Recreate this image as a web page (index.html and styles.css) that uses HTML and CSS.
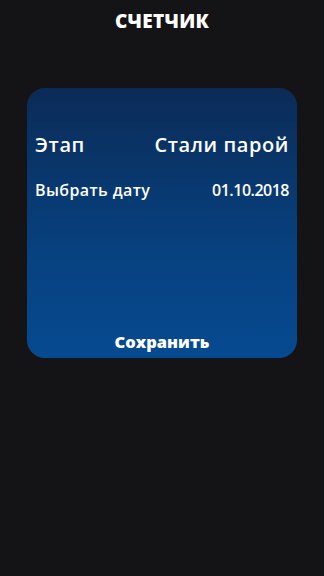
FILE: index.html
```html
<!DOCTYPE html>
<html lang="ru">
<head>
<meta charset="utf-8">
<link rel="stylesheet" href="styles.css">
</head>
<body>
<div class="screen">
  <h1 class="title">СЧЕТЧИК</h1>
  <div class="card">
    <div class="row row-main">
      <span>Этап</span>
      <span>Стали парой</span>
    </div>
    <div class="row row-sub">
      <span class="sub-label">Выбрать дату</span>
      <span class="sub-value">01.10.2018</span>
    </div>
    <div class="spacer"></div>
    <div class="save">Сохранить</div>
  </div>
</div>
</body>
</html>
```
FILE: styles.css
```css
html, body {
  margin: 0;
  padding: 0;
  background: #141416;
}
.screen {
  width: 324px;
  height: 576px;
  background: #141416;
  color: #ffffff;
  font-family: "Open Sans", "Noto Sans", sans-serif;
  display: flex;
  flex-direction: column;
  align-items: center;
}
.title {
  margin: 8px 0 0 0;
  font-size: 19px;
  font-weight: 800;
  line-height: 26px;
  letter-spacing: 0.3px;
}
.card {
  margin-top: 54px;
  width: 270px;
  height: 270px;
  box-sizing: border-box;
  border-radius: 18px;
  background: linear-gradient(180deg, #0b2b57 0%, #07417f 60%, #064a90 100%);
  display: flex;
  flex-direction: column;
  padding: 43px 8px 5px 8px;
}
.row {
  display: flex;
  justify-content: space-between;
  align-items: baseline;
}
.row-main {
  font-size: 20px;
  font-weight: 600;
  line-height: 28px;
  letter-spacing: 0.6px;
}
.row-sub {
  margin-top: 20px;
  font-size: 16px;
  font-weight: 600;
  line-height: 22px;
}
.sub-label {
  letter-spacing: 0.4px;
}
.sub-value {
  letter-spacing: -0.5px;
}
.save {
  text-align: center;
  font-size: 16.5px;
  font-weight: 800;
  line-height: 22px;
}
.spacer { flex: 1; }
```
